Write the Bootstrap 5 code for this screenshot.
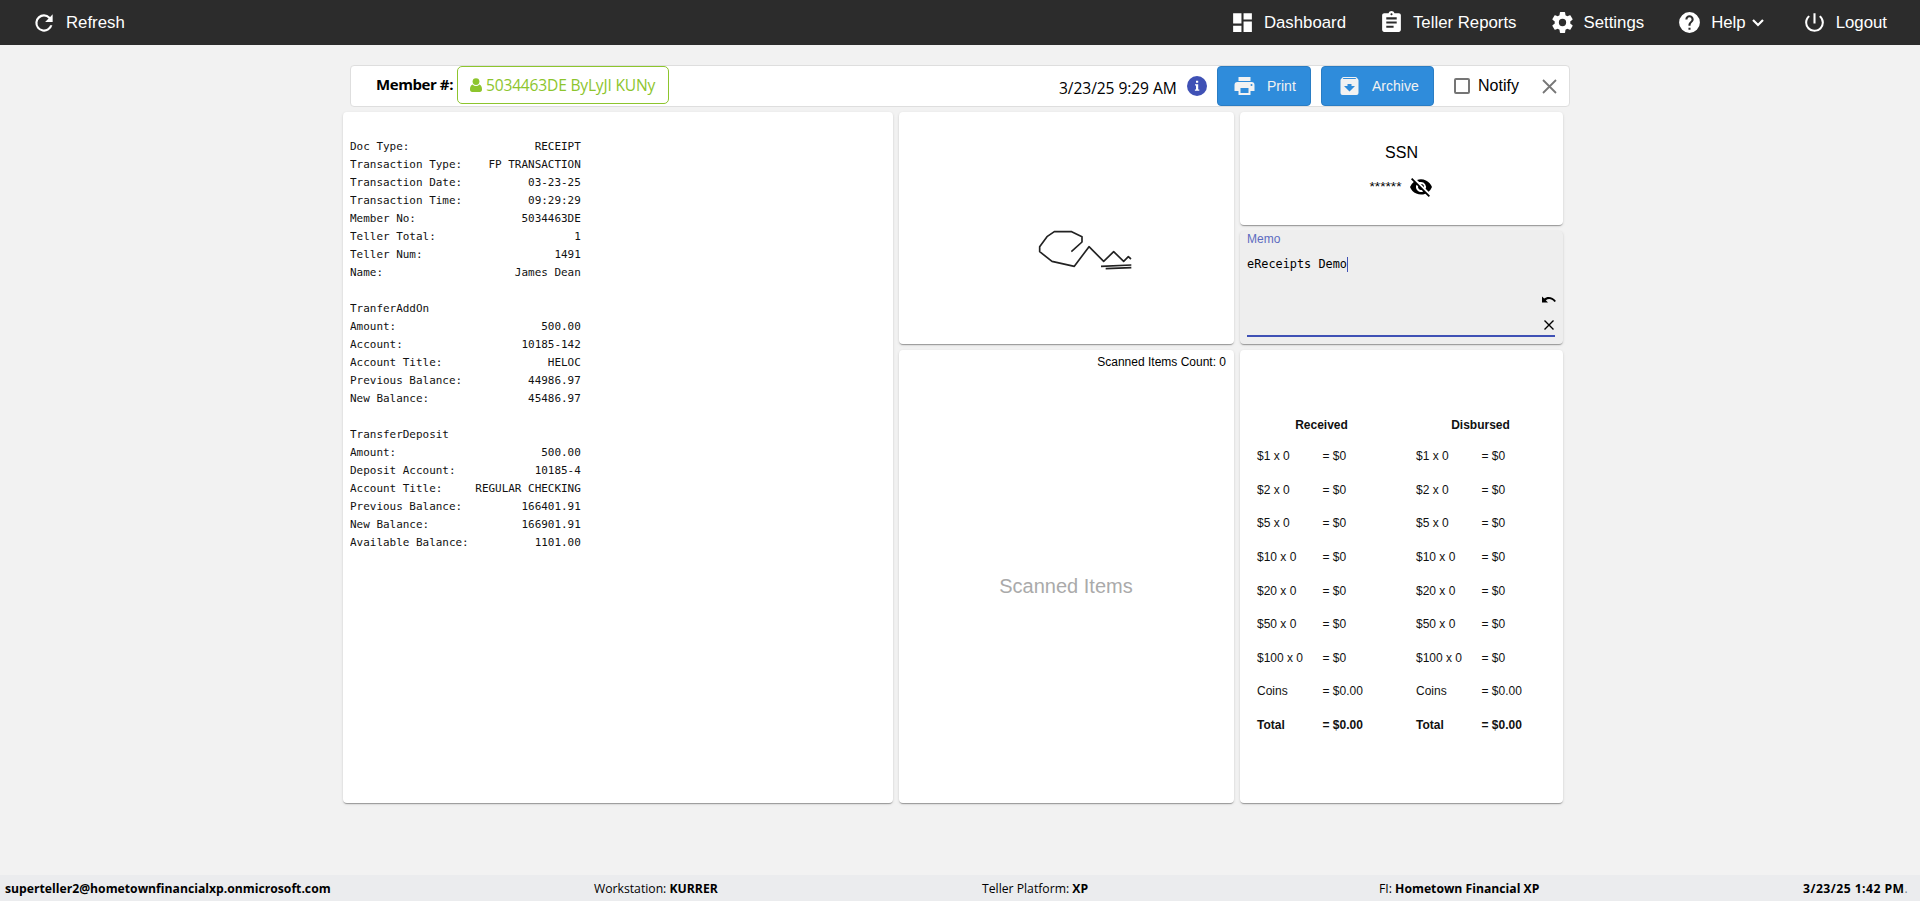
<!DOCTYPE html>
<html lang="en">
<head>
<meta charset="utf-8">
<title>Teller Receipt</title>
<meta name="viewport" content="width=device-width, initial-scale=1">
<link href="https://cdn.jsdelivr.net/npm/bootstrap@5.3.0/dist/css/bootstrap.min.css" rel="stylesheet">
<style>
body{height:901px;overflow:hidden;background:#f2f2f2;color:#000;font-family:"Liberation Sans",Arial,sans-serif;font-size:12px;line-height:18px}
svg{display:block;flex:none}
.segoe{font-family:"Open Sans","Noto Sans",sans-serif}
.topbar{height:45px;background:#2c2c2c;padding:0 33px 0 31px;font-size:16.8px;gap:33px}
.topbar a{color:#fff;text-decoration:none;white-space:nowrap}
.topbar svg{width:25px;height:25px}
.topbar .lbl{margin-left:9px;line-height:24px}
.topbar .reload{width:26px;height:26px;margin-top:1px}
.topbar .chev{width:12px;height:8px;margin:1px 5px 0 6px}
.paper{background:#fff;border-radius:4px;box-shadow:0 2px 1px -1px rgba(0,0,0,.2),0 1px 1px rgba(0,0,0,.14),0 1px 3px rgba(0,0,0,.12)}
.docbar{width:1220px;height:42px;margin:20px 0 0 350px;background:#fff;border:1px solid #dedede;border-radius:4px;font-size:16px}
.memlabel{margin:9px 3px 0 25px;width:78px;white-space:nowrap;font-size:15px;letter-spacing:-.42px}
.memberbtn{width:212px;height:38px;border:1px solid #8dc52d;border-radius:5px;color:#8dc52d;font-size:15.6px;letter-spacing:-.2px;line-height:24px;padding:0 0 0 12px;background:#fff;white-space:nowrap}
.docside{width:511px}
.stamp{width:129px;padding:3px 0 0 1px;white-space:nowrap;font-size:15.6px;letter-spacing:-.08px}
.actbtn{height:40px;background:#2f8cdb;border:1px solid #2a7dc4;border-radius:4px;color:#f2f2f2;font-size:14px;padding:0;margin-left:10px;gap:10px}
.print{width:94px;padding-left:14px}
.archive{width:113px;padding-left:15px}
.tick{width:16px;height:16px;border:2px solid #757575;border-radius:2px;margin-left:20px}
.notify{margin-left:8px;width:64px}
.board{display:grid;grid-template-columns:550px 335px 323px;grid-template-rows:113px 113px 453px;gap:6px;margin:5px 0 0 343px}
.receipt{grid-row:1/4;padding:26px 0 0 7px}
.receipt pre{font-family:"DejaVu Sans Mono",monospace;font-size:10.96px;line-height:18px;margin:0;color:#111;overflow:hidden}
.sign{grid-row:1/3;grid-column:2;padding:116.5px 0 0 137.5px}
.scans{grid-column:2;grid-row:3}
.scans .count{padding:3px 8px 0 0}
.scans .hint{color:#aaa;font-size:20px;line-height:30px;margin:200px 1px 0 0}
.ssn,.memo,.cash{grid-column:3}
.ssn .title{font-size:16px;line-height:20px;margin-top:31px}
.ssn .value{margin-top:12px;font-size:13.7px;gap:8px}
.memo{background:#eee;padding:0 8px 0 7px}
.memo .field{height:106px;border-bottom:2px solid #3f51b5}
.memo .cap{color:#5c6bc0;line-height:17px}
.memo .txt{font-family:"DejaVu Sans Mono",monospace;font-size:11.87px;line-height:15px;margin-top:9px}
.memo .tools{padding-top:65px;margin-right:-1px}
.caret{width:1px;height:15px;background:#3f51b5}
.cash{padding:66px 0 0 17px;gap:30px}
.tally{display:grid;grid-template-columns:65.5px 63.5px;grid-template-rows:31px repeat(9,33.65px);width:129px;color:#111}
.tally .head{grid-column:1/3;text-align:center;font-weight:bold}
.tally>*{white-space:nowrap}
.foot{height:26px;margin-top:72px;background:#ebecee;display:grid;grid-template-columns:589px 388px 397px 424px 1fr;padding-left:5px;font-size:12.2px;line-height:27px;white-space:nowrap}
.foot .clock{letter-spacing:.45px}
</style>
</head>
<body>
<nav class="topbar d-flex align-items-center">
  <a href="#" class="d-flex align-items-center me-auto"><svg class="reload" viewBox="0 0 24 24" fill="#fff"><path d="M17.65 6.35A7.96 7.96 0 0 0 12 4a8 8 0 1 0 7.730 10h-2.080A6 6 0 1 1 12 6c1.660 0 3.140.69 4.220 1.780L13 11h7V4z"/></svg><span class="lbl">Refresh</span></a>
  <a href="#" class="d-flex align-items-center"><svg viewBox="0 0 24 24" fill="#fff"><path d="M3 13h8V3H3zm0 8h8v-6H3zm10 0h8V11h-8zm0-18v6h8V3z"/></svg><span class="lbl">Dashboard</span></a>
  <a href="#" class="d-flex align-items-center"><svg viewBox="0 0 24 24" fill="#fff"><path d="M19 3h-4.180C14.400 1.840 13.300 1 12 1s-2.400.84-2.820 2H5c-1.100 0-2 .9-2 2v14c0 1.100.9 2 2 2h14c1.100 0 2-.9 2-2V5c0-1.100-.9-2-2-2m-7 0c.55 0 1 .45 1 1s-.45 1-1 1-1-.45-1-1 .45-1 1-1m2 14H7v-2h7zm3-4H7v-2h10zm0-4H7V7h10z"/></svg><span class="lbl">Teller Reports</span></a>
  <a href="#" class="d-flex align-items-center"><svg viewBox="0 0 24 24" fill="#fff"><path d="M19.43 12.98c.04-.32.07-.64.07-.98s-.03-.66-.07-.98l2.110-1.650c.19-.15.24-.42.12-.64l-2-3.460c-.12-.22-.39-.3-.61-.22l-2.490 1c-.52-.4-1.080-.73-1.690-.98l-.38-2.650A.49.49 0 0 0 14 2h-4c-.25 0-.46.18-.49.42l-.38 2.650c-.61.25-1.170.59-1.690.98l-2.490-1c-.23-.09-.49 0-.61.22l-2 3.460c-.13.22-.07.49.12.64l2.110 1.650c-.04.32-.07.65-.07.98s.03.66.07.98l-2.110 1.650c-.19.15-.24.42-.12.64l2 3.460c.12.22.39.3.61.22l2.490-1c.52.4 1.080.73 1.690.98l.38 2.650c.03.24.24.42.49.42h4c.25 0 .46-.18.49-.42l.38-2.650c.61-.25 1.170-.59 1.690-.98l2.490 1c.23.09.49 0 .61-.22l2-3.460c.12-.22.07-.49-.12-.64zM12 15.500a3.500 3.500 0 1 1 0-7 3.500 3.500 0 0 1 0 7"/></svg><span class="lbl">Settings</span></a>
  <a href="#" class="d-flex align-items-center"><svg viewBox="0 0 24 24" fill="#fff"><path d="M12 2a10 10 0 1 0 0 20 10 10 0 0 0 0-20m1 17h-2v-2h2zm2.070-7.750-.9.92C13.450 12.900 13 13.500 13 15h-2v-.5c0-1.100.45-2.100 1.170-2.830l1.240-1.260c.37-.36.59-.86.59-1.410a2 2 0 1 0-4 0H8a4 4 0 1 1 8 0c0 .88-.36 1.680-.93 2.250"/></svg><span class="lbl">Help</span><svg class="chev" viewBox="0 0 12 8" fill="none" stroke="#fff" stroke-width="2.200"><path d="M1 1l5 5 5-5"/></svg></a>
  <a href="#" class="d-flex align-items-center"><svg viewBox="0 0 24 24" fill="#fff"><path d="M13 3h-2v10h2zm4.830 2.170-1.420 1.420A6.920 6.920 0 0 1 19 12a7 7 0 1 1-11.420-5.420L6.170 5.170A8.930 8.930 0 0 0 3 12a9 9 0 0 0 18 0c0-2.740-1.230-5.180-3.170-6.830"/></svg><span class="lbl">Logout</span></a>
</nav>

<section class="docbar d-flex">
  <b class="segoe memlabel">Member #:</b>
  <button class="memberbtn d-flex align-items-center gap-1 segoe"><svg width="12" height="14" viewBox="0 0 12 14" fill="#8dc52d"><circle cx="6" cy="3.600" r="3.400"/><path d="M2.600 6.600C.6 7.200 0 9.400 0 11.500 0 13 .8 14 2.200 14h7.600C11.200 14 12 13 12 11.500c0-2.100-.6-4.300-2.600-4.900a4.600 4.600 0 0 1-6.800 0z"/></svg><span>5034463DE ByLyJI KUNy</span></button>
  <div class="docside ms-auto d-flex align-items-center">
    <span class="segoe stamp">3/23/25 9:29 AM</span>
    <svg width="20" height="20" viewBox="0 0 20 20"><circle cx="10" cy="10" r="10" fill="#3f51b5"/><path d="M9 4.800h2.200v2H9zM8 8.300h3.200v5.200h1.100v1.300H7.900v-1.300H9V9.500H8z" fill="#fff"/></svg>
    <button class="actbtn print d-flex align-items-center"><svg width="25" height="24" viewBox="0 0 24 24" fill="#f2f2f2"><path d="M19 8H5a3 3 0 0 0-3 3v6h4v4h12v-4h4v-6a3 3 0 0 0-3-3m-3 11H8v-5h8zm3-7a1 1 0 1 1 0-2 1 1 0 0 1 0 2m-1-9H6v4h12z"/></svg><span>Print</span></button>
    <button class="actbtn archive d-flex align-items-center"><svg width="25" height="24" viewBox="0 0 24 24" fill="#f2f2f2"><path d="m20.540 5.230-1.390-1.680A1.450 1.450 0 0 0 18 3H6c-.47 0-.88.21-1.160.55L3.460 5.230C3.170 5.570 3 6.020 3 6.500V19a2 2 0 0 0 2 2h14a2 2 0 0 0 2-2V6.500c0-.48-.17-.93-.46-1.270M12 17.500 6.500 12H10v-2h4v2h3.500zM5.120 5l.81-1h12l.94 1z"/></svg><span>Archive</span></button>
    <span class="tick"></span>
    <span class="notify">Notify</span>
    <svg width="15" height="15" viewBox="0 0 15 15" stroke="#777" stroke-width="1.800"><path d="M1 1l13 13M14 1L1 14"/></svg>
  </div>
</section>

<main class="board">
  <section class="paper receipt"><pre>
Doc Type:                   RECEIPT
Transaction Type:    FP TRANSACTION
Transaction Date:          03-23-25
Transaction Time:          09:29:29
Member No:                5034463DE
Teller Total:                     1
Teller Num:                    1491
Name:                    James Dean

TranferAddOn
Amount:                      500.00
Account:                  10185-142
Account Title:                HELOC
Previous Balance:          44986.97
New Balance:               45486.97

TransferDeposit
Amount:                      500.00
Deposit Account:            10185-4
Account Title:     REGULAR CHECKING
Previous Balance:         166401.91
New Balance:              166901.91
Available Balance:          1101.00</pre></section>
  <section class="paper sign"><svg width="97" height="42" viewBox="110 85 291 126" fill="none" stroke="#222" stroke-width="5" stroke-linejoin="round"><path d="M213 153l32-29v-16l-31-15h-52l-22 15-22 30v15l37 29 67 15 44-59 44 44 30-29 30 29 14-14 8 7M302 197l91-4M316 204l77-3"/></svg></section>
  <section class="paper ssn d-flex flex-column align-items-center">
    <div class="title">SSN</div>
    <div class="value d-flex align-items-center"><span>******</span><svg width="24" height="24" viewBox="0 0 24 24"><path d="M12 7a5 5 0 0 1 4.640 6.830l2.920 2.920A11.820 11.820 0 0 0 22.990 12 11.830 11.830 0 0 0 8.010 4.890l2.160 2.160C10.740 7.130 11.350 7 12 7M2 4.270l2.740 2.740A11.800 11.800 0 0 0 1 12a11.830 11.830 0 0 0 15.380 6.660L19.730 22 21 20.730 3.270 3zM7.530 9.800l1.550 1.550a3 3 0 0 0 3.570 3.570l1.550 1.550A5 5 0 0 1 7.530 9.800m4.310-.78 3.150 3.150.02-.16a3 3 0 0 0-3-3z"/></svg></div>
  </section>
  <section class="paper memo">
    <div class="field d-flex">
      <div class="me-auto"><div class="cap">Memo</div><div class="txt d-flex"><span>eReceipts Demo</span><i class="caret"></i></div></div>
      <div class="tools d-flex flex-column align-items-center"><svg width="14" height="8" viewBox="0 0 14 8"><path d="M0 .5l2.200 2.100C5 .1 10.500.2 14 5l-1.600.9C9.500 2.400 6.500 2.300 3.800 4.200L6 6.500H0z"/></svg><svg class="mt-3" width="10" height="10" viewBox="0 0 10 10" stroke="#000" stroke-width="1.400"><path d="M.5.5l9 9M9.500.5l-9 9"/></svg></div>
    </div>
  </section>
  <section class="paper scans"><div class="count text-end">Scanned Items Count: 0</div><div class="hint text-center">Scanned Items</div></section>
  <section class="paper cash d-flex" id="cash"></section>
</main>

<footer class="foot segoe"><b>superteller2@hometownfinancialxp.onmicrosoft.com</b><span>Workstation: <b>KURRER</b></span><span>Teller Platform: <b>XP</b></span><span>FI: <b>Hometown Financial XP</b></span><span class="clock"><b>3/23/25 1:42 PM</b><span class="text-black-50">.</span></span></footer>
<script src="https://cdn.jsdelivr.net/npm/bootstrap@5.3.0/dist/js/bootstrap.bundle.min.js"></script>
<script>
const rows=['$1','$2','$5','$10','$20','$50','$100'].map(v=>`<span>${v} x 0</span><span>= $0</span>`).join('');
document.getElementById('cash').innerHTML=['Received','Disbursed'].map(t=>`<div class="tally"><span class="head">${t}</span>${rows}<span>Coins</span><span>= $0.00</span><b>Total</b><b>= $0.00</b></div>`).join('');
</script>
</body>
</html>
